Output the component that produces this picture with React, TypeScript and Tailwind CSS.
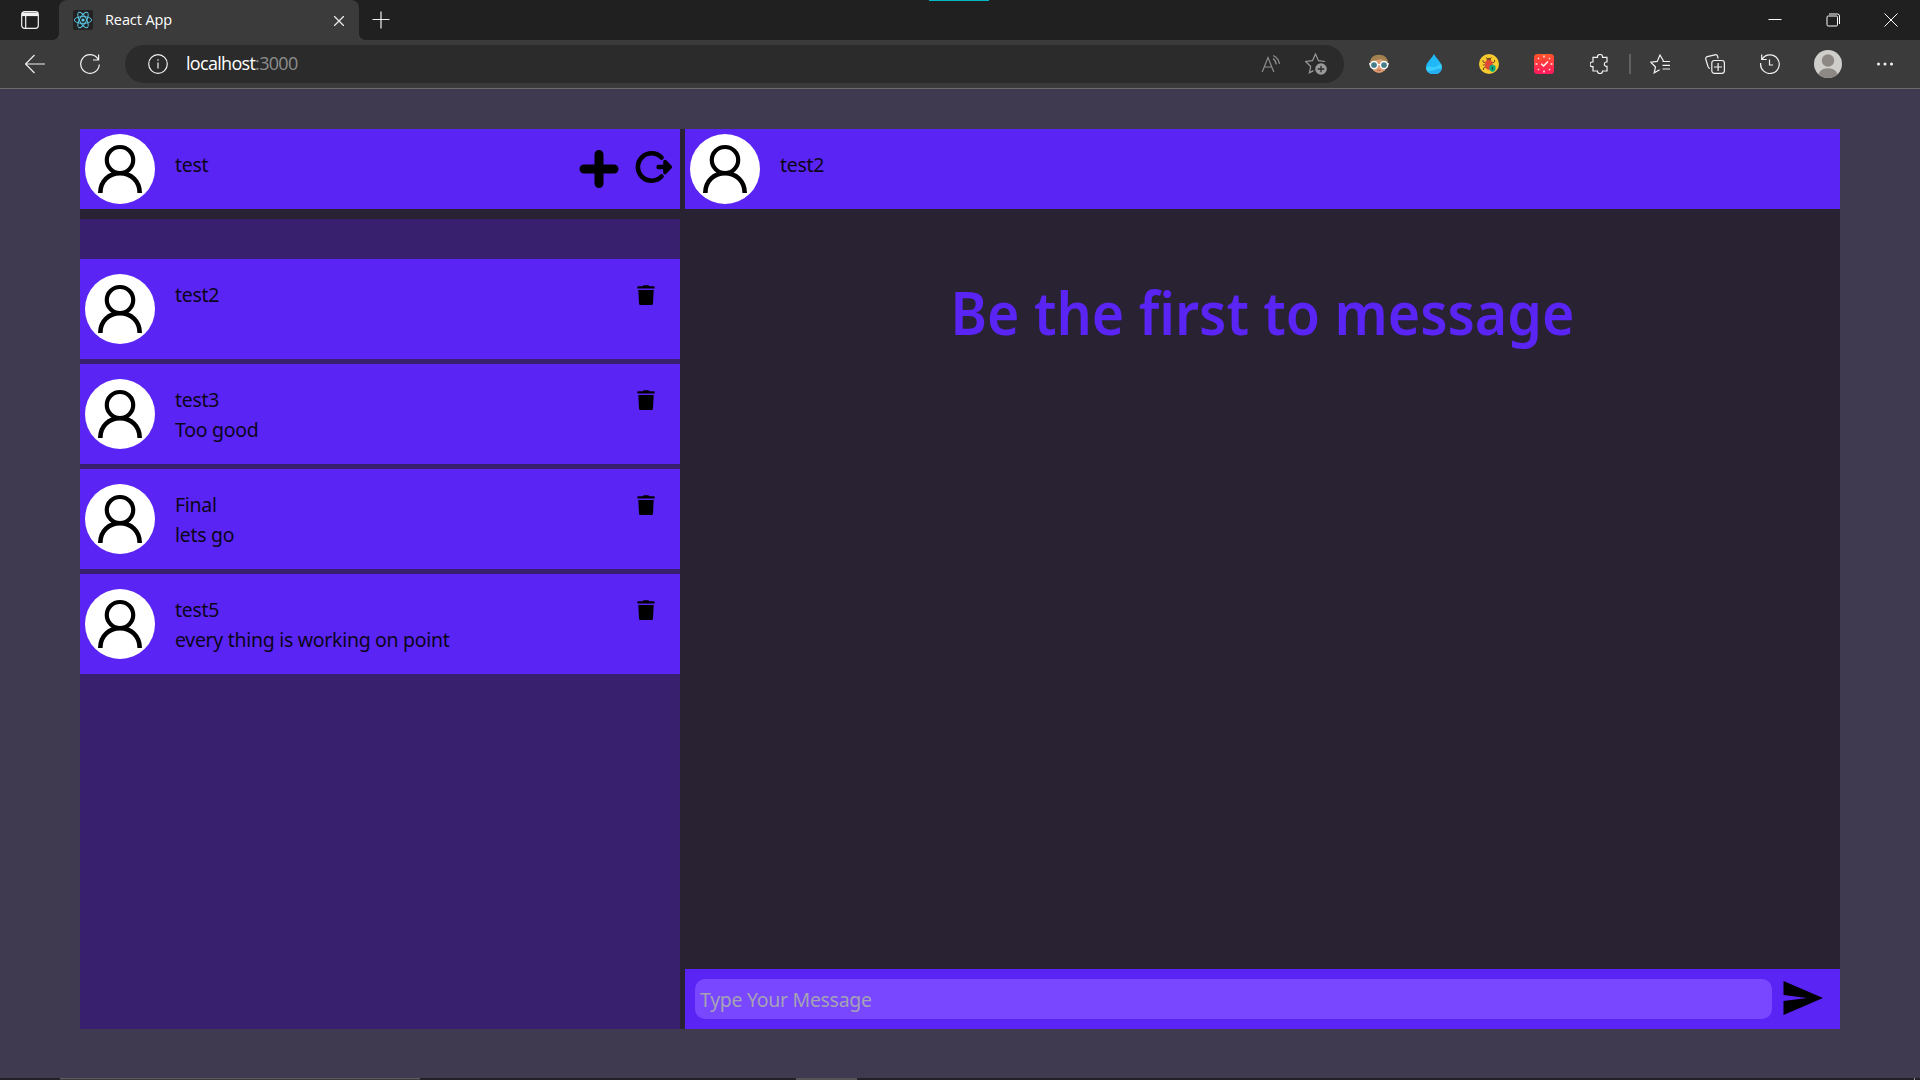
import React from "react";

const contacts = [
  { name: "test2", last: "" },
  { name: "test3", last: "Too good" },
  { name: "Final", last: "lets go" },
  { name: "test5", last: "every thing is working on point" },
];

function Icon({ children, className = "", box = "0 0 20 20" }: { children: React.ReactNode; className?: string; box?: string }) {
  return (
    <svg viewBox={box} fill="none" stroke="currentColor" strokeWidth="1.2" className={`block size-5 shrink-0 ${className}`}>
      {children}
    </svg>
  );
}

function Avatar() {
  return (
    <svg viewBox="0 0 70 70" fill="none" stroke="#000" className="block size-[70px] shrink-0 rounded-full bg-white">
      <ellipse cx="35" cy="26" rx="13.2" ry="13" strokeWidth="4.2" />
      <path d="M15.3 59C15.3 47 24 39.3 35 39.3S54.7 47 54.7 59" strokeWidth="4.6" />
    </svg>
  );
}

function Trash() {
  return (
    <svg viewBox="0 0 18 20" fill="#000" className="block h-5 w-[18px]">
      <path d="M1 1.200h4.600L6.600.2h4.800l1 1H17a.6.6 0 0 1 .6.6v1.600H.4V1.800A.6.6 0 0 1 1 1.200zM1.300 5.100h15.400l-.7 13.400a1.500 1.500 0 0 1-1.500 1.500h-11A1.500 1.500 0 0 1 2 18.500z" />
    </svg>
  );
}

function ReactLogo() {
  return (
    <svg viewBox="0 0 20 20" fill="none" stroke="#5ccfee" strokeWidth="0.9" className="block size-5 rounded-[2px] bg-[#222222]">
      <ellipse cx="10" cy="10" rx="8.700" ry="3.400" />
      <ellipse cx="10" cy="10" rx="8.700" ry="3.400" transform="rotate(60 10 10)" />
      <ellipse cx="10" cy="10" rx="8.700" ry="3.400" transform="rotate(120 10 10)" />
      <circle cx="10" cy="10" r="1.600" fill="#5ccfee" stroke="none" />
    </svg>
  );
}

function TabStrip() {
  return (
    <div className="relative flex h-10 bg-[#202020] text-white">
      <div className="flex h-10 w-[59px] items-center pl-[21px]">
        <svg viewBox="0 0 18 18" fill="none" stroke="#f2f2f2" strokeWidth="1.2" className="block size-[18px]">
          <rect x="0.700" y="0.700" width="16.600" height="16.600" rx="2.800" />
          <path d="M1 1.500h16v3.600H1z" fill="#f2f2f2" stroke="none" />
          <path d="M4.700 5v12.500" />
        </svg>
      </div>
      <div className="relative flex h-10 w-[300px] items-center rounded-t-lg bg-[#3b3b3b] pl-[14px]">
        <span className="absolute bottom-0 left-[-6px] size-[6px] bg-[radial-gradient(circle_at_0_0,#202020_5.500px,#3b3b3b_6px)]" />
        <span className="absolute right-[-6px] bottom-0 size-[6px] bg-[radial-gradient(circle_at_100%_0,#202020_5.500px,#3b3b3b_6px)]" />
        <ReactLogo />
        <span className="ml-[12px] w-[229px] font-['Open_Sans'] text-[14.5px] leading-5 tracking-[-0.1px]">React App</span>
        <svg viewBox="0 0 10 10" stroke="#e8e8e8" strokeWidth="1.300" className="mt-px block size-[10px]">
          <path d="M0 0l10 10M10 0L0 10" />
        </svg>
      </div>
      <svg viewBox="0 0 18 18" stroke="#f2f2f2" strokeWidth="1.200" className="mt-[11px] ml-[12.500px] block size-[18px]">
        <path d="M9 0.500v17M0.500 8.500h17" />
      </svg>
      <div className="absolute top-0 left-[929px] h-px w-[60px] bg-[#00b7c3]" />
      <div className="mr-[22px] ml-auto flex items-center gap-[44px]">
        <svg viewBox="0 0 14 14" stroke="#fff" className="block size-[14px]"><path d="M0.500 6.500h13" /></svg>
        <svg viewBox="0 0 14 14" fill="none" stroke="#fff" className="block size-[14px]">
          <rect x="1" y="3" width="10.500" height="10" rx="1.200" />
          <path d="M3 1h8.500A2 2 0 0 1 13.500 3v8" />
        </svg>
        <svg viewBox="0 0 14 14" stroke="#fff" className="block size-[14px]"><path d="M0.500 0.500l13 13M13.500 0.500l-13 13" /></svg>
      </div>
    </div>
  );
}

function Toolbar() {
  return (
    <div className="flex h-[49px] items-center border-b border-[#6a6a66] bg-[#3b3b3b] text-[#f2f2f2]">
      <Icon className="ml-[25px]"><path d="M0.500 10H20M9.500 1L0.500 10l9 9" /></Icon>
      <Icon className="ml-[35px]"><path d="M19.300 10.500A9.300 9.300 0 1 1 17.300 4.200L18.600 6M18.600 0.500V6H13" /></Icon>
      <div className="ml-[25px] flex h-[38px] w-[1219px] items-center rounded-full bg-[#2b2b2b]">
        <Icon className="ml-[22.500px]"><circle cx="10" cy="10" r="9.300" /><path d="M10 8.500v6M10 5.200v1.600" /></Icon>
        <span className="mb-[2px] ml-[18.500px] font-['Open_Sans'] text-[18px] leading-6 tracking-[-0.7px] text-white">
          localhost<span className="text-[#8d8d8d]">:3000</span>
        </span>
        <Icon className="ml-auto text-[#8f8f8f]"><path d="M1.200 18L7 3.500 12.800 18M3.200 13h7.600M12 4.500a8 8 0 0 1 3.200 6M12.200 1.500a11.500 11.500 0 0 1 6.300 8.500" /></Icon>
        <Icon box="0 0 22 22" className="mr-[17px] ml-[24px] !size-[22px] text-[#9a9a9a]">
          <path d="M20 8.500l-6.500-.8L10.500 1 7.500 7.700.7 8.500l5 5-1.300 6.300 4-2.200" />
          <circle cx="16" cy="16" r="5.800" fill="currentColor" stroke="none" />
          <path d="M16 12.700v6.600M12.700 16h6.600" stroke="#2b2b2b" strokeWidth="1.300" />
        </Icon>
      </div>
      <Icon className="ml-[25px]">
        <g stroke="none">
          <ellipse cx="10" cy="10" rx="8.300" ry="9" fill="#dd9b74" />
          <path d="M0.800 8.500C1.500 3.500 5 .8 10 .8s8.500 2.700 9.200 7.700l-2-.5L14 6.500 12 5 4 7 3 8.500z" fill="#a3814f" />
        </g>
        <circle cx="5" cy="11" r="3.600" fill="#467d89" stroke="#fff" strokeWidth="1.500" />
        <circle cx="15" cy="11" r="3.600" fill="#467d89" stroke="#fff" strokeWidth="1.500" />
        <path d="M0 9.800h2M18 9.800h2M8.500 10.500h3" stroke="#fff" />
        <path d="M8.300 16.300h3.400" stroke="#b8664d" />
      </Icon>
      <Icon className="ml-[35px]">
        <g stroke="none">
          <path d="M10 0C8 4 2 9 2 13a8 7.300 0 0 0 16 0c0-4-6-9-8-13z" fill="#20b8f8" />
          <path d="M2 13.500c3-2.500 6 .5 9-.5 3-.9 4-3 6-3 2 5 0 10-7 10.300-5 0-8-3-8-6.800z" fill="#36cdfb" />
          <path d="M4 17c4 1 6-2 13.500-2.500-1 4-4 5.800-7.500 5.800-2.700 0-5-1.300-6-3.300z" fill="#25aef2" />
        </g>
      </Icon>
      <Icon className="ml-[35px]">
        <circle cx="10" cy="10" r="10" fill="#f8cc2e" stroke="none" />
        <path d="M4 6v2l3 1M3.800 11H7M4.500 16v-2L7 13M15.500 6v2L13 9M7 3.200L8.500 5M12.500 3.200L11 5" stroke="#7a4a25" strokeWidth="1" />
        <ellipse cx="9.800" cy="10.500" rx="3.900" ry="5.300" fill="#e04934" stroke="none" />
        <path d="M7.500 6a2.300 2.300 0 0 1 4.600 0z" fill="#7a4a25" stroke="none" />
        <path d="M10.500 12l3-1.500 3 1.500v3c0 1.500-1.500 2.500-3 3-1.500-.5-3-1.500-3-3z" fill="#0aa783" stroke="none" />
        <path d="M13.500 13v2.500" stroke="#075445" />
      </Icon>
      <Icon className="ml-[35px]">
        <defs>
          <linearGradient id="clockFill" x1="0" y1="0" x2="0" y2="1"><stop stopColor="#ff5428" /><stop offset="1" stopColor="#ff175f" /></linearGradient>
        </defs>
        <rect width="20" height="20" rx="3.500" fill="url(#clockFill)" stroke="none" />
        <path d="M10 1.500v2M10 16.500v2M1.500 10h2M16.500 10h2M4 4l1 1M16 4l-1 1M4 16l1-1M16 16l-1-1" stroke="#ffe5df" strokeWidth="1.500" />
        <path d="M7.300 9.800l2.200 2.200L14 7.500" stroke="#fff" strokeWidth="1.300" />
      </Icon>
      <Icon className="ml-[36px]">
        <path d="M3 3.300H7.500V2.500a2.500 2 0 0 1 5 0V3.300H17V8h-1a2.200 2.200 0 0 0 0 4.300H17V17H12.500v.6a2.500 2 0 0 1-5 0V17H3V12.700H2.300a2.300 2.300 0 0 1 0-4.700H3z" />
      </Icon>
      <div className="ml-[19px] h-5 w-[2px] bg-[#606060]" />
      <Icon className="ml-[19px]">
        <path d="M13.500 7L10 1 7.200 7.400.8 8.200l4.700 4.800L4.200 18.800l5.500-3M12.500 7.500H20M12.500 11.300H20M12.500 15H20" />
      </Icon>
      <Icon className="ml-[35px]">
        <path d="M5 14.500a2.500 2.500 0 0 1-2-2L.8 5.300a2 2 0 0 1 1.400-2.600L10 .8a2.200 2.200 0 0 1 2.600 1.500L13.200 4.500" />
        <rect x="6.800" y="6.500" width="12.600" height="12.800" rx="2.500" />
        <path d="M13.100 9v8M9 13h8" />
      </Icon>
      <Icon className="ml-[35px]">
        <path d="M2.200 5A9.300 9.300 0 1 1 .7 9M1.700 0.500V5.500H6.700M9.500 5.500V11H13" />
      </Icon>
      <svg viewBox="0 0 28 28" className="ml-[34px] block size-7 rounded-full bg-[#d0ceca]">
        <circle cx="14" cy="10.500" r="6.200" fill="#8d8884" />
        <path d="M4 28c0-7 4.500-9.800 10-9.800S24 21 24 28z" fill="#8d8884" />
      </svg>
      <svg viewBox="0 0 16 4" fill="#f2f2f2" className="ml-[35px] block h-1 w-4">
        <circle cx="1.500" cy="2" r="1.500" /><circle cx="8" cy="2" r="1.500" /><circle cx="14.500" cy="2" r="1.500" />
      </svg>
    </div>
  );
}

function Sidebar() {
  return (
    <section className="flex w-[600px] flex-col gap-[10px]">
      <header className="flex h-20 bg-[#5a24f5] p-[5px]">
        <Avatar />
        <p className="mt-[16px] ml-5 leading-[30px]">test</p>
        <svg viewBox="0 0 40 40" stroke="#000" strokeWidth="9" strokeLinecap="round" className="mt-[15px] ml-auto block size-10">
          <path d="M20 5.500v29M5 20h30" />
        </svg>
        <svg viewBox="0 0 40 40" fill="none" stroke="#000" strokeLinecap="round" className="mt-[13px] mr-[2px] ml-[14px] block size-10">
          <path d="M28.500 10.500A13.700 13.700 0 1 0 28.500 29.500" strokeWidth="4.600" />
          <path d="M25.500 20H34" strokeWidth="4.400" />
          <path d="M32 14.500L37.300 20 32 25.500z" fill="#000" strokeWidth="3.600" strokeLinejoin="round" />
        </svg>
      </header>
      <div className="flex flex-1 flex-col gap-[5px] bg-[#38206f] pt-10">
        {contacts.map((c) => (
          <article key={c.name} className="flex h-[100px] bg-[#5a24f5] px-[5px] pt-[15px]">
            <Avatar />
            <div className="mt-[6px] ml-5 leading-[30px]">
              <p>{c.name}</p>
              <p>{c.last}</p>
            </div>
            <div className="mt-[11px] mr-[20px] ml-auto"><Trash /></div>
          </article>
        ))}
      </div>
    </section>
  );
}

function Chat() {
  return (
    <section className="flex flex-1 flex-col">
      <header className="flex h-20 bg-[#5a24f5] p-[5px]">
        <Avatar />
        <p className="mt-[16px] ml-5 leading-[30px]">test2</p>
      </header>
      <div className="flex-1 pt-[61px] text-center">
        <h1 className="scale-x-[0.94] text-[59px] leading-[84px] font-semibold tracking-normal text-[#5a24f5]">Be the first to message</h1>
      </div>
      <footer className="flex h-[60px] items-center bg-[#5a24f5] pl-[10px]">
        <div className="h-10 w-[1077px] rounded-[10px] bg-[#7847ff] pl-[5px] leading-[42px] text-[#a5a2b5]">Type Your Message</div>
        <svg viewBox="0 0 40 34" className="mb-[3px] ml-[11px] block h-[34px] w-10">
          <path d="M0.500 0L40 17 0.500 34V20L24 17 0.500 14z" />
        </svg>
      </footer>
    </section>
  );
}

export default function App() {
  return (
    <div className="flex h-[1080px] w-[1920px] flex-col overflow-hidden bg-[#403a50]">
      <TabStrip />
      <Toolbar />
      <main className="flex flex-1 px-20 pt-10 pb-[49px] font-['Noto_Sans'] text-[19.5px] tracking-[-0.3px] text-[#0b0618]">
        <div className="flex h-[900px] flex-1 gap-[5px] bg-[#292233]">
          <Sidebar />
          <Chat />
        </div>
      </main>
      <div className="flex h-[2px] bg-[#222127]">
        <div className="ml-[60px] h-full w-[360px] border-t border-[#5e5c5c] bg-[#3b3a3a]" />
        <div className="ml-[376px] h-full w-[61px] bg-[#555456]" />
        <div className="mr-[5px] ml-auto h-full w-px bg-[#99979c]" />
      </div>
    </div>
  );
}
